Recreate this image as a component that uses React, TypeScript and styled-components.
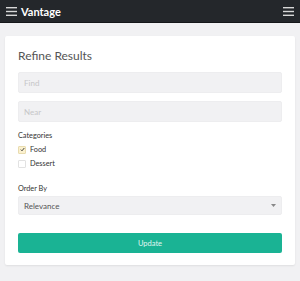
import styled, { createGlobalStyle } from 'styled-components';

const GlobalStyle = createGlobalStyle`
    html, body {
        margin: 0;
        padding: 0;
        background: #f1f1f3;
        font-family: Lato, "Open Sans", sans-serif;
    }
`;

const Navbar = styled.header`
    display: flex;
    align-items: center;
    justify-content: space-between;
    height: 22px;
    padding: 0 6px 0 6px;
    background-color: #24272b;
    border-bottom: 1px solid #15171a;
`;

const Brand = styled.div`
    display: flex;
    align-items: center;
    gap: 4px;
    color: #fff;
    font-weight: 700;
    font-size: 11px;
`;

const Page = styled.main`
    padding: 13px 5px 16px;
`;

const Card = styled.section`
    display: flex;
    flex-direction: column;
    background: #fff;
    border-radius: 2px;
    box-shadow: 0 1px 2px rgba(0, 0, 0, 0.08);
    padding: 13px 13px 12px;
`;

const Title = styled.h2`
    margin: 0 0 9px;
    font-size: 12px;
    line-height: 14px;
    font-weight: 400;
    color: #555;
`;

const Field = styled.input`
    box-sizing: border-box;
    height: 21px;
    margin-bottom: 8px;
    padding: 0 5px;
    border: 1px solid #ededef;
    border-radius: 2px;
    background: #f1f1f3;
    font-family: inherit;
    font-size: 8px;
    color: #555;
    &::placeholder {
        color: #c6c6c8;
    }
`;

const Label = styled.div<{ $gap?: number }>`
    margin-top: ${p => p.$gap ?? 1}px;
    font-size: 7.3px;
    line-height: 9px;
    color: #333;
`;

const Check = styled.label`
    display: flex;
    align-items: center;
    gap: 4px;
    height: 9px;
    margin-top: 5px;
    font-size: 7.3px;
    color: #333;
`;

const Box = styled.span<{ $on?: boolean }>`
    display: flex;
    align-items: center;
    justify-content: center;
    width: 6px;
    height: 6px;
    border: 1px solid ${p => (p.$on ? '#e9dcb0' : '#e2e2e2')};
    border-radius: 1px;
    background: ${p => (p.$on ? '#fbf1cf' : '#fff')};
`;

const Select = styled.div`
    box-sizing: border-box;
    display: flex;
    align-items: center;
    justify-content: space-between;
    height: 19px;
    margin-top: 3px;
    padding: 0 5px;
    border-radius: 2px;
    background: #f1f1f3;
    border: 1px solid #ededef;
    font-size: 8px;
    color: #555;
`;

const Button = styled.button`
    height: 20px;
    margin-top: 18px;
    border: 0;
    border-radius: 2px;
    background: #1ab394;
    color: #e2f6f1;
    font-family: inherit;
    font-size: 7.5px;
`;

const Burger = () => (
    <svg width="11" height="9" viewBox="0 0 11 9">
        <rect x="0" y="0" width="11" height="1.4" fill="#d8d8d8" />
        <rect x="0" y="3.8" width="11" height="1.4" fill="#d8d8d8" />
        <rect x="0" y="7.6" width="11" height="1.4" fill="#d8d8d8" />
    </svg>
);

export default function App() {
    return (
        <>
            <GlobalStyle />
            <Navbar>
                <Brand>
                    <Burger />
                    Vantage
                </Brand>
                <Burger />
            </Navbar>
            <Page>
                <Card>
                    <Title>Refine Results</Title>
                    <Field placeholder="Find" />
                    <Field placeholder="Near" />
                    <Label>Categories</Label>
                    <Check>
                        <Box $on>
                            <svg width="5" height="5" viewBox="0 0 5 5">
                                <path d="M0.8 2.6 L2 3.8 L4.3 1" stroke="#333" strokeWidth="0.9" fill="none" />
                            </svg>
                        </Box>
                        Food
                    </Check>
                    <Check>
                        <Box />
                        Dessert
                    </Check>
                    <Label $gap={16}>Order By</Label>
                    <Select>
                        Relevance
                        <svg width="5" height="3" viewBox="0 0 5 3">
                            <path d="M0 0 L5 0 L2.5 3 Z" fill="#888" />
                        </svg>
                    </Select>
                    <Button>Update</Button>
                </Card>
            </Page>
        </>
    );
}
